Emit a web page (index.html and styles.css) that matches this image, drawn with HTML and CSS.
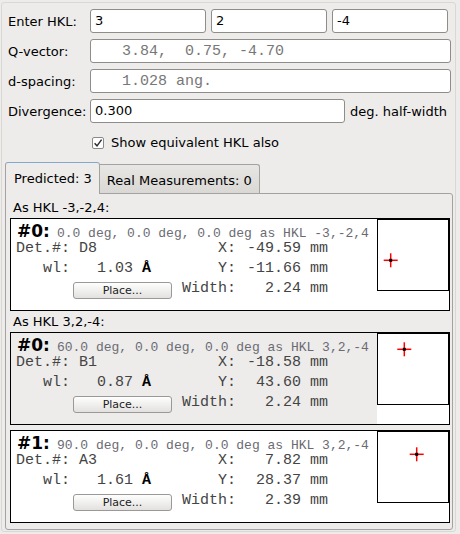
FILE: index.html
```html
<!DOCTYPE html>
<html>
<head>
<meta charset="utf-8">
<link rel="stylesheet" href="styles.css">
</head>
<body>
<div class="frame">
  <div class="form">
    <div class="row">
      <span class="lbl">Enter HKL:</span>
      <div class="hkl">
        <div class="field w116">3</div>
        <div class="field w116">2</div>
        <div class="field w116">-4</div>
      </div>
    </div>
    <div class="row"><span class="lbl">Q-vector:</span><div class="field ro wide">   3.84,  0.75, -4.70</div></div>
    <div class="row"><span class="lbl">d-spacing:</span><div class="field ro wide">   1.028 ang.</div></div>
    <div class="row"><span class="lbl">Divergence:</span><div class="field divf">0.300</div><span class="unit">deg. half-width</span></div>
    <div class="check-row">
      <span class="checkbox"><svg width="10" height="10" viewBox="0 0 10 10"><path d="M1.6 5.2 L4 7.8 L8.6 1.6" fill="none" stroke="#2b2b2b" stroke-width="1.4"/></svg></span>
      <span>Show equivalent HKL also</span>
    </div>
  </div>

  <div class="tabbar">
    <div class="tab active">Predicted: 3</div>
    <div class="tab">Real Measurements: 0</div>
  </div>

  <div class="pane">
    <div class="group-label">As HKL -3,-2,4:</div>
    <div class="card">
      <div class="info">
        <div class="title"><b>#0:</b><span class="coords">0.0 deg, 0.0 deg, 0.0 deg as HKL -3,-2,4</span></div>
        <div class="grid">
          <span class="r">Det.#:</span><span> D8</span><span class="r">X:</span><span class="r">-49.59 mm</span>
          <span class="r">wl:</span><span>   1.03 <b class="ang">Å</b></span><span class="r">Y:</span><span class="r">-11.66 mm</span>
          <div class="btn">Place...</div><span class="r">Width:</span><span class="r">2.24 mm</span>
        </div>
      </div>
      <svg class="thumb" width="72" height="72" viewBox="0 0 72 72">
        <rect x="0.5" y="0.5" width="71" height="71" fill="#fff" stroke="#000"/>
        <line x1="6.7" y1="41.3" x2="20.7" y2="41.3" stroke="#f00" stroke-width="1.5"/>
        <line x1="13.7" y1="34.3" x2="13.7" y2="48.3" stroke="#f00" stroke-width="1.5"/>
        <rect x="12.2" y="39.8" width="3" height="3" fill="#000"/>
      </svg>
    </div>

    <div class="group-label second">As HKL 3,2,-4:</div>
    <div class="card shaded">
      <div class="info">
        <div class="title"><b>#0:</b><span class="coords">60.0 deg, 0.0 deg, 0.0 deg as HKL 3,2,-4</span></div>
        <div class="grid">
          <span class="r">Det.#:</span><span> B1</span><span class="r">X:</span><span class="r">-18.58 mm</span>
          <span class="r">wl:</span><span>   0.87 <b class="ang">Å</b></span><span class="r">Y:</span><span class="r">43.60 mm</span>
          <div class="btn">Place...</div><span class="r">Width:</span><span class="r">2.24 mm</span>
        </div>
      </div>
      <svg class="thumb" width="72" height="72" viewBox="0 0 72 72">
        <rect x="0.5" y="0.5" width="71" height="71" fill="#fff" stroke="#000"/>
        <line x1="20.3" y1="16.3" x2="34.3" y2="16.3" stroke="#f00" stroke-width="1.5"/>
        <line x1="27.3" y1="9.3" x2="27.3" y2="23.3" stroke="#f00" stroke-width="1.5"/>
        <rect x="25.8" y="14.8" width="3" height="3" fill="#000"/>
      </svg>
    </div>

    <div class="card next">
      <div class="info">
        <div class="title"><b>#1:</b><span class="coords">90.0 deg, 0.0 deg, 0.0 deg as HKL 3,2,-4</span></div>
        <div class="grid">
          <span class="r">Det.#:</span><span> A3</span><span class="r">X:</span><span class="r">7.82 mm</span>
          <span class="r">wl:</span><span>   1.61 <b class="ang">Å</b></span><span class="r">Y:</span><span class="r">28.37 mm</span>
          <div class="btn">Place...</div><span class="r">Width:</span><span class="r">2.39 mm</span>
        </div>
      </div>
      <svg class="thumb" width="72" height="72" viewBox="0 0 72 72">
        <rect x="0.5" y="0.5" width="71" height="71" fill="#fff" stroke="#000"/>
        <line x1="32.7" y1="23.3" x2="46.7" y2="23.3" stroke="#f00" stroke-width="1.5"/>
        <line x1="39.7" y1="16.3" x2="39.7" y2="30.3" stroke="#f00" stroke-width="1.5"/>
        <rect x="38.2" y="21.8" width="3" height="3" fill="#000"/>
      </svg>
    </div>
  </div>
</div>
</body>
</html>
```

FILE: styles.css
```css
body {
  margin: 0;
  background: #edeceb;
  font-family: "DejaVu Sans", sans-serif;
  font-size: 13px;
  color: #000;
}

.frame {
  margin: 2px 0 0 1px;
  width: 455px;
  height: 530px;
  box-sizing: border-box;
  border: 1px solid #d9d8d5;
  border-radius: 3px;
}

.form {
  padding: 6px 0 0 6px;
  display: flex;
  flex-direction: column;
  gap: 6px;
}

.row {
  display: flex;
  align-items: center;
  height: 24px;
}

.lbl {
  width: 82px;
  flex: none;
  white-space: nowrap;
}

.hkl {
  display: flex;
  gap: 5px;
}

.field {
  box-sizing: border-box;
  height: 24px;
  border: 1px solid #8e8d8a;
  border-radius: 3px;
  background: #fff;
  padding: 0 4px;
  line-height: 22px;
  overflow: hidden;
  white-space: nowrap;
}

.w116 { width: 116px; }
.wide { width: 361px; }
.divf { width: 255px; }

.ro {
  font-family: "Liberation Mono", monospace;
  font-size: 15px;
  color: #777;
  white-space: pre;
  line-height: 20px;
  padding-top: 2px;
}

.unit {
  margin-left: 5px;
  white-space: nowrap;
}

.check-row {
  display: flex;
  align-items: center;
  height: 16px;
  line-height: 16px;
  margin-top: 6px;
  padding-left: 84px;
}

.checkbox {
  width: 12px;
  height: 12px;
  box-sizing: border-box;
  border: 1px solid #8a8a88;
  border-radius: 2px;
  background: #fff;
  margin-right: 7px;
  display: flex;
  align-items: center;
  justify-content: center;
}

.checkbox svg { display: block; }

.tabbar {
  display: flex;
  align-items: flex-end;
  height: 31px;
  margin-top: 11px;
  padding-left: 3px;
}

.tab {
  box-sizing: border-box;
  height: 29px;
  padding: 8px 7px 0;
  border: 1px solid #a3a2a0;
  border-bottom: none;
  border-left: none;
  border-radius: 0 3px 0 0;
  background: linear-gradient(#e7e6e4, #d9d8d5);
  line-height: 16px;
  white-space: nowrap;
}

.tab.active {
  height: 32px;
  margin-bottom: -1px;
  position: relative;
  z-index: 1;
  padding: 8px 7px 0 8px;
  background: #edeceb;
  border-left: 1px solid #a3a2a0;
  border-top-color: #86a7cc;
  border-radius: 3px 3px 0 0;
}

.pane {
  margin-left: 3px;
  width: 448px;
  height: 337px;
  box-sizing: border-box;
  border: 1px solid #a3a2a0;
  border-radius: 0 3px 3px 3px;
  padding: 6px 2px 0 4px;
  background: #edeceb;
}

.group-label {
  line-height: 16px;
  padding-left: 3px;
  white-space: nowrap;
}

.group-label.second { margin-top: 3px; }

.card {
  display: flex;
  width: 440px;
  height: 93px;
  box-sizing: border-box;
  border: 1px solid #000;
  background: #fff;
  margin-top: 2px;
}

.card.next { margin-top: 5px; }

.info {
  flex: 1;
  min-width: 0;
  overflow: hidden;
  padding: 4px 0 0 4px;
}

.card.shaded .info { background: #edeceb; }

.title {
  display: flex;
  align-items: baseline;
  height: 16px;
  line-height: 16px;
  margin-left: 2px;
  white-space: nowrap;
}

.title b {
  font-size: 17px;
  font-weight: bold;
}

.coords {
  font-family: "Liberation Mono", monospace;
  font-size: 13px;
  color: #6b6b73;
  margin-left: 7px;
}

.grid {
  display: grid;
  grid-template-columns: 55px 112px 54px 92px;
  grid-auto-rows: 20px;
  font-family: "Liberation Mono", monospace;
  font-size: 15px;
  line-height: 20px;
  color: #444;
  white-space: pre;
}

.r { text-align: right; }

.ang {
  color: #000;
  font-weight: bold;
}

.btn {
  grid-column: 1 / span 2;
  align-self: start;
  margin: 3px 0 0 58px;
  width: 99px;
  height: 17px;
  box-sizing: border-box;
  border: 1px solid #9a9996;
  border-radius: 3px;
  background: linear-gradient(#fefefe, #e2e1df);
  font-family: "DejaVu Sans", sans-serif;
  font-size: 11px;
  line-height: 15px;
  text-align: center;
  color: #222;
}

.thumb {
  flex: none;
  display: block;
  width: 72px;
  height: 72px;
}
```
